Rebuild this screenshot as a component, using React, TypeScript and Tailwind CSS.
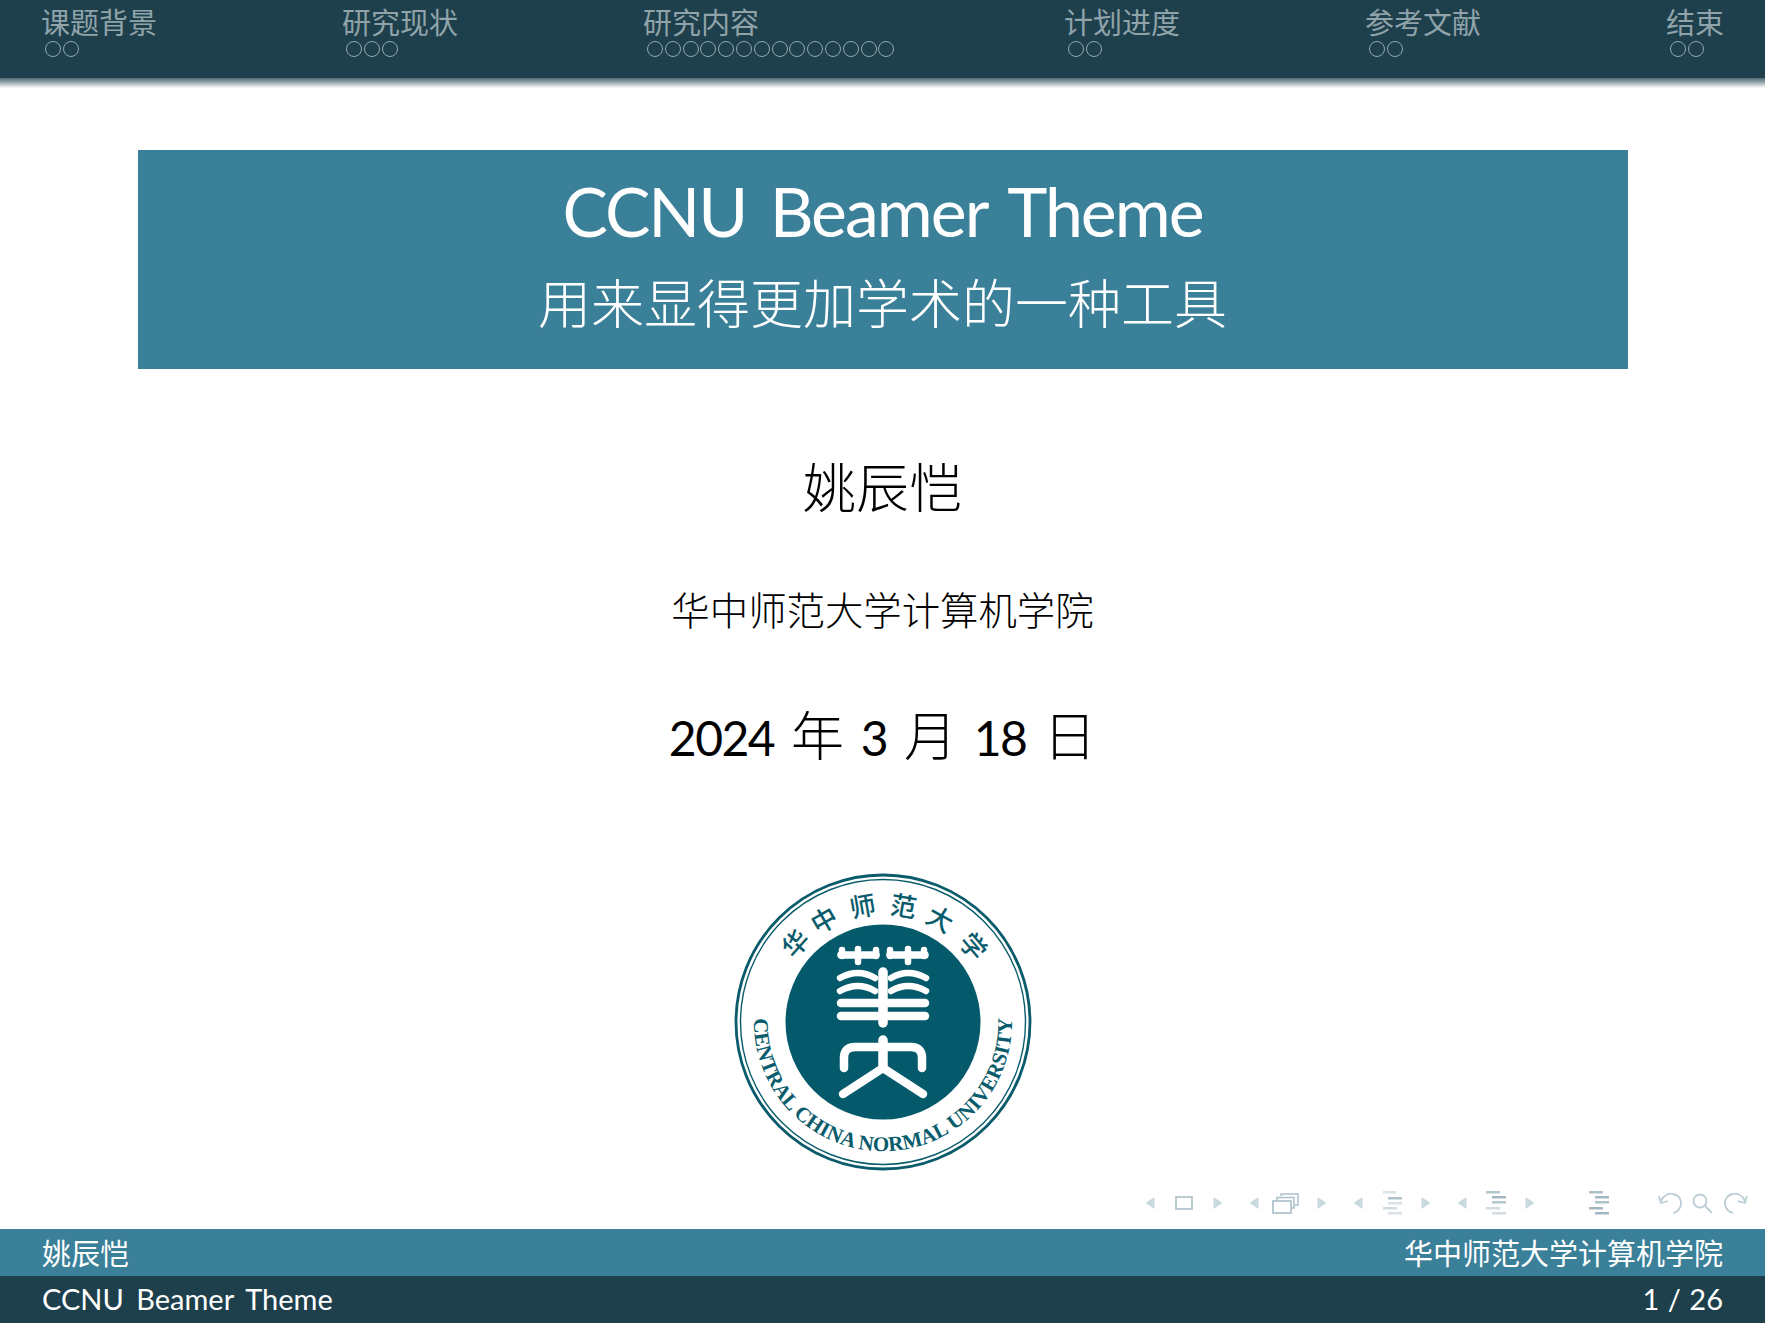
import React from "react";

const sections = [
  { title: "课题背景", dots: 2, width: "w-[301px]" },
  { title: "研究现状", dots: 3, width: "w-[301px]" },
  { title: "研究内容", dots: 14, width: "w-[421px]" },
  { title: "计划进度", dots: 2, width: "w-[301px]" },
  { title: "参考文献", dots: 2, width: "w-[301px]" },
  { title: "结束", dots: 2, width: "w-[60px]" },
];

const sansFont = "font-['Lato','Noto_Sans_CJK_SC',sans-serif]";
const cjkFont = "font-['Noto_Sans_CJK_SC',sans-serif]";

const sealChars = [
  { char: "华", angle: -48 },
  { char: "中", angle: -30 },
  { char: "师", angle: -10 },
  { char: "范", angle: 10 },
  { char: "大", angle: 29 },
  { char: "学", angle: 50 },
];

function Triangle({ dir }: { dir: "left" | "right" }) {
  return (
    <svg width="10" height="14" viewBox="0 0 10 14" className="shrink-0">
      <path
        d={dir === "left" ? "M9.5 1 L0.5 7 L9.5 13 Z" : "M0.5 1 L9.5 7 L0.5 13 Z"}
        fill="#c9d9e0"
      />
    </svg>
  );
}

function Lines({ rows }: { rows: { x: number; y: number; w: number; c: string }[] }) {
  return (
    <svg width="21" height="24" viewBox="0 0 21 24" className="shrink-0">
      {rows.map((r) => (
        <rect key={r.y} x={r.x} y={r.y} width={r.w} height="2.5" fill={r.c} />
      ))}
    </svg>
  );
}

function NavSymbols() {
  return (
    <div className="mb-[14px] flex h-[24px] items-center justify-end pr-[17px]">
      <Triangle dir="left" />
      <svg width="18" height="14" viewBox="0 0 18 14" className="ml-[20px] shrink-0">
        <rect x="1" y="1" width="16" height="12" fill="none" stroke="#b4c7cf" strokeWidth="1.8" />
      </svg>
      <div className="ml-[20px]">
        <Triangle dir="right" />
      </div>
      <div className="ml-[26px]">
        <Triangle dir="left" />
      </div>
      <svg width="27" height="21" viewBox="0 0 27 21" className="ml-[13px] shrink-0">
        <g fill="none" stroke="#adc1ca" strokeWidth="1.5">
          <path d="M9 3 V1 H26 V12 H22" />
          <path d="M5 7 V4.5 H22 V15 H19" />
          <rect x="1" y="8" width="18" height="12" strokeWidth="1.7" />
        </g>
      </svg>
      <div className="ml-[18px]">
        <Triangle dir="right" />
      </div>
      <div className="ml-[26px]">
        <Triangle dir="left" />
      </div>
      <div className="ml-[19px]">
        <Lines
          rows={[
            { x: 1, y: 0, w: 13, c: "#d8e3e8" },
            { x: 6, y: 6, w: 14, c: "#adc1ca" },
            { x: 6, y: 11, w: 14, c: "#d8e3e8" },
            { x: 1, y: 16, w: 14, c: "#cfdde3" },
            { x: 6, y: 21, w: 14, c: "#d8e3e8" },
          ]}
        />
      </div>
      <div className="ml-[18px]">
        <Triangle dir="right" />
      </div>
      <div className="ml-[26px]">
        <Triangle dir="left" />
      </div>
      <div className="ml-[19px]">
        <Lines
          rows={[
            { x: 0, y: 0, w: 14, c: "#b4c7cf" },
            { x: 6, y: 5, w: 14, c: "#a3b8c2" },
            { x: 6, y: 10, w: 14, c: "#b4c7cf" },
            { x: 0, y: 16, w: 14, c: "#cfdde3" },
            { x: 6, y: 21, w: 14, c: "#cfdde3" },
          ]}
        />
      </div>
      <div className="ml-[18px]">
        <Triangle dir="right" />
      </div>
      <div className="ml-[54px]">
        <Lines
          rows={[
            { x: 0, y: 0, w: 14, c: "#adc1ca" },
            { x: 6, y: 5, w: 14, c: "#a3b8c2" },
            { x: 6, y: 10, w: 14, c: "#adc1ca" },
            { x: 0, y: 16, w: 14, c: "#a3b8c2" },
            { x: 6, y: 21, w: 14, c: "#a3b8c2" },
          ]}
        />
      </div>
      <svg width="90" height="22" viewBox="0 0 90 22" className="ml-[48px] shrink-0">
        <g fill="none" stroke="#bccdd5" strokeWidth="1.8">
          <path d="M3 9 C6 3 11 1 15 2 C21 3 24 8 23 13 C22 17 19 20 15 21" />
          <path d="M1 4 L3 11 L10 9" />
          <circle cx="42" cy="9" r="6.5" />
          <path d="M47 14 L54 21" />
          <path d="M87 9 C84 3 79 1 75 2 C69 3 66 8 67 13 C68 17 71 20 75 21" />
          <path d="M89 4 L87 11 L80 9" />
        </g>
      </svg>
    </div>
  );
}

function Logo() {
  const teal = "#0a5c6c";
  return (
    <svg width="300" height="300" viewBox="-150 -150 300 300" className="block shrink-0">
      <circle r="147" fill="none" stroke={teal} strokeWidth="2.8" />
      <circle r="142.5" fill="none" stroke={teal} strokeWidth="1.4" />
      <circle r="97.5" fill="#045a6b" />

      {sealChars.map((s) => (
        <text
          key={s.char}
          transform={`rotate(${s.angle}) translate(0 -108)`}
          textAnchor="middle"
          fontSize="26"
          fontWeight="500"
          fill={teal}
          fontFamily="'Noto Sans CJK SC', sans-serif"
        >
          {s.char}
        </text>
      ))}

      {/* runs a bit past the half circle so the first and last letters stay on the path */}
      <defs>
        <path id="seal-bottom" d="M -127 -22.4 A 129 129 0 1 0 127 -22.4" fill="none" />
      </defs>
      <text
        fontSize="21"
        fontWeight="700"
        fill={teal}
        fontFamily="'Liberation Serif', serif"
        textAnchor="middle"
      >
        <textPath href="#seal-bottom" startOffset="50%">
          CENTRAL CHINA NORMAL UNIVERSITY
        </textPath>
      </text>

      <g fill="none" stroke="#fff" strokeLinecap="round" strokeLinejoin="round">
        {[1, -1].map((m) => (
          <g key={m} transform={`scale(${m} 1)`} strokeWidth="6.5">
            <path d="M-42 -67 H-7" strokeWidth="7.5" />
            <path d="M-41 -72 V-66 M-7 -72 V-66" />
            <path d="M-25 -73 V-60" />
            <path d="M-43 -44 Q-25 -54 -8 -44" />
            <path d="M-43 -31 Q-25 -41 -8 -31" />
          </g>
        ))}
        <path d="M-42 -19 H42" strokeWidth="8.5" />
        <path d="M-42 -6 H42" strokeWidth="8.5" />
        <path d="M0 -50 V1" strokeWidth="9.5" />
        <path d="M0 18 V46" strokeWidth="9.5" />
        <path d="M-39 46 V36 Q-39 25 -28 25 H28 Q39 25 39 36 V46" strokeWidth="8.5" />
        <path d="M-40 72 L0 46 L40 72" strokeWidth="8.5" />
      </g>
    </svg>
  );
}

export default function App() {
  return (
    <div className={`flex h-[1323px] w-full flex-col overflow-hidden bg-white ${sansFont}`}>
      <header className="flex h-[78px] shrink-0 bg-[#1e3f4c] pl-[41px] pt-[1px]">
        {sections.map((s) => (
          <div key={s.title} className={`${s.width} shrink-0`}>
            <div className={`h-[40px] text-[29px] leading-[40px] text-[#8fa3a9] ${cjkFont}`}>{s.title}</div>
            <div className="flex gap-[1.8px] pl-[4px]">
              {Array.from({ length: s.dots }).map((_, i) => (
                <span key={i} className="h-[16px] w-[16px] rounded-full border-[1.5px] border-[#93a8ae]" />
              ))}
            </div>
          </div>
        ))}
      </header>
      <div className="h-[10px] shrink-0 bg-gradient-to-b from-[#4d6a73] to-white" />

      <main className="flex flex-1 flex-col items-center pt-[62px]">
        <section className="flex h-[219px] w-[1490px] flex-col items-center bg-[#3b8099] text-white">
          <h1 className="mt-[21px] h-[80px] text-[68px] font-normal leading-[80px] tracking-[-2px] [word-spacing:8px]">
            CCNU Beamer Theme
          </h1>
          <p className={`mt-[10px] h-[80px] text-[53px] leading-[80px] ${cjkFont} font-light`}>
            用来显得更加学术的一种工具
          </p>
        </section>

        <p className={`mt-[86px] h-[60px] text-[53px] leading-[60px] text-black ${cjkFont} font-light`}>姚辰恺</p>
        <p className={`mt-[69px] h-[48px] text-[38.4px] leading-[48px] text-black ${cjkFont} font-light`}>
          华中师范大学计算机学院
        </p>
        <p className="mt-[69px] h-[64px] text-[48px] leading-[64px] tracking-[-1.5px] text-black [word-spacing:6px]">
          2024 <span className={`${cjkFont} text-[53px] font-light tracking-normal`}>年</span> 3{" "}
          <span className={`${cjkFont} text-[53px] font-light tracking-normal`}>月</span> 18{" "}
          <span className={`${cjkFont} text-[53px] font-light tracking-normal`}>日</span>
        </p>

        <div className="mt-[107px]">
          <Logo />
        </div>
      </main>

      <div className="shrink-0">
        <NavSymbols />
      </div>

      <footer className="shrink-0 text-white">
        <div className={`flex h-[47px] items-center justify-between bg-[#3b8099] px-[42px] text-[29px] ${cjkFont}`}>
          <span>姚辰恺</span>
          <span>华中师范大学计算机学院</span>
        </div>
        <div className="flex h-[47px] items-center justify-between bg-[#1e3f4c] px-[42px] pb-[1px] text-[29px]">
          <span className="[word-spacing:5px]">CCNU Beamer Theme</span>
          <span className="[word-spacing:1px]">1 / 26</span>
        </div>
      </footer>
    </div>
  );
}
